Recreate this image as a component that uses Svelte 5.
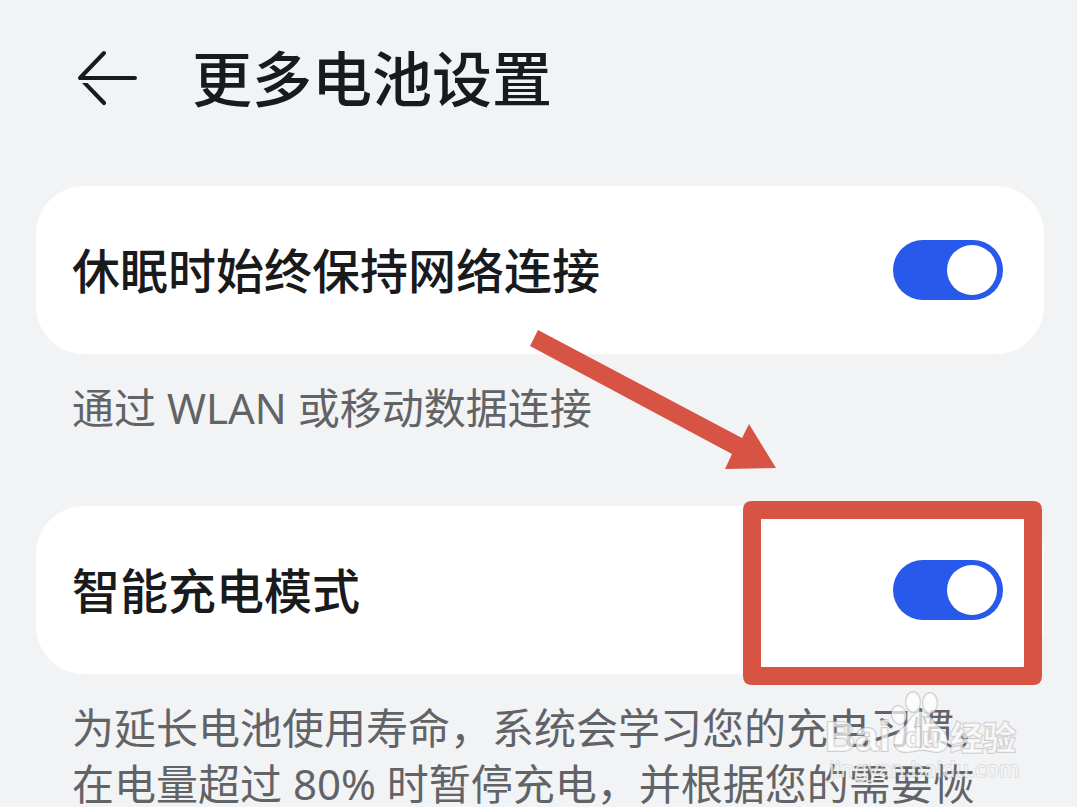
<script>
  let keepNetwork = true;
  let smartCharge = true;
</script>

<div class="page">
  <header>
    <button class="back" type="button" aria-label="返回">
      <svg width="64" height="60" viewBox="0 0 64 60">
        <path class="shaft" d="M28 5L4 30H59" />
        <path class="barb" d="M6 35H11.500L29.500 53.500A2 2 0 0 1 26.500 56.500Z" />
      </svg>
    </button>
    <h1>更多电池设置</h1>
  </header>

  <section>
    <div class="card">
      <label for="network">休眠时始终保持网络连接</label>
      <div class="control">
        <input id="network" class="switch" type="checkbox" role="switch" bind:checked={keepNetwork} />
      </div>
      <svg class="arrow" width="248" height="142" viewBox="0 0 248 142">
        <path d="M9 0L213 108L220 94L247 138L196 139L203 124L1 16Z" />
      </svg>
    </div>
    <p>通过 WLAN 或移动数据连接</p>
  </section>

  <section>
    <div class="card">
      <label for="charge">智能充电模式</label>
      <div class="control">
        <input id="charge" class="switch" type="checkbox" role="switch" bind:checked={smartCharge} />
        <svg class="frame" width="300" height="184" viewBox="0 0 300 184">
          <path fill-rule="evenodd" d="M9 0H290Q299 0 299 9V175Q299 184 290 184H9Q0 184 0 175V9Q0 0 9 0ZM18 18V166H281V18Z" />
        </svg>
      </div>
    </div>
    <div class="note">
      <p>为延长电池使用寿命，系统会学习您的充电习惯，在电量超过 80% 时暂停充电，并根据您的需要恢</p>
      <svg class="watermark" width="204" height="100" viewBox="0 0 204 100">
        <text class="brand" x="5" y="61">Bai</text>
        <g class="paw">
          <ellipse cx="93" cy="12" rx="7" ry="10" />
          <ellipse cx="110" cy="13" rx="7" ry="10" />
          <ellipse cx="79" cy="25" rx="7" ry="9" transform="rotate(-15 79 25)" />
          <path d="M101 22C92 22 90 33 83 38C71 46 71 62 86 62C93 62 96 60 102 60C108 60 112 62 117 62C130 62 130 46 120 38C112 33 110 22 101 22Z" />
        </g>
        <text class="du" x="85" y="57">du</text>
        <text class="cn" x="130" y="60">经验</text>
        <text class="url" x="9" y="87">jingyan.baidu.com</text>
      </svg>
    </div>
  </section>
</div>

<style>
  :global(body) {
    margin: 0;
    background: #f2f3f5;
    overflow: hidden;
  }
  .page {
    padding: 42px 33px 0 36px;
    font-family: "Noto Sans CJK SC", sans-serif;
    color: #191a1c;
  }
  header {
    display: flex;
    align-items: center;
    gap: 52px;
    height: 72px;
    padding-left: 40px;
    margin-bottom: 72px;
  }
  .back {
    display: flex;
    padding: 0;
    border: 0;
    background: none;
  }
  .shaft {
    fill: none;
    stroke: #191a1c;
    stroke-width: 4;
    stroke-linecap: round;
    stroke-linejoin: round;
  }
  .barb { fill: #191a1c; }
  h1 {
    margin: 0;
    padding-bottom: 4px;
    font-size: 60px;
    line-height: 72px;
    font-weight: 500;
  }
  section { margin-bottom: 70px; }
  .card {
    position: relative;
    display: flex;
    align-items: center;
    justify-content: space-between;
    height: 168px;
    padding: 0 41px 0 36px;
    border-radius: 48px;
    background: #fff;
  }
  label {
    padding-bottom: 4px;
    font-size: 48px;
    line-height: 60px;
    font-weight: 500;
  }
  .control {
    position: relative;
    display: flex;
  }
  .switch {
    appearance: none;
    display: flex;
    align-items: center;
    box-sizing: border-box;
    width: 110px;
    height: 60px;
    margin: 0;
    padding: 0 6px;
    border-radius: 30px;
    background: #c9cbd0;
  }
  .switch::before {
    content: "";
    width: 50px;
    height: 50px;
    border-radius: 50%;
    background: #fff;
  }
  .switch:checked {
    justify-content: flex-end;
    background: #2859ea;
  }
  p {
    margin: 0;
    padding: 26px 36px 0;
    font-family: "Noto Sans", "Noto Sans CJK SC", sans-serif;
    font-size: 42px;
    line-height: 56px;
    color: #626366;
  }
  .arrow {
    position: absolute;
    left: 493px;
    top: 144px;
    fill: #d75344;
    pointer-events: none;
  }
  .frame {
    position: absolute;
    right: -40px;
    top: -59px;
    fill: #d75344;
    pointer-events: none;
  }
  .note { position: relative; }
  .watermark {
    position: absolute;
    right: 20px;
    top: 16px;
    overflow: visible;
    fill: #fff;
    fill-opacity: 0.7;
    stroke: #aaa;
    stroke-opacity: 0.5;
    stroke-width: 2;
    paint-order: stroke;
    pointer-events: none;
  }
  .brand, .du {
    font-family: "Liberation Sans", sans-serif;
    font-weight: 700;
    font-size: 42px;
  }
  .du { font-size: 28px; }
  .cn {
    font-weight: 700;
    font-size: 33px;
  }
  .url {
    font-family: "Noto Sans", sans-serif;
    font-size: 22px;
    stroke-opacity: 0.3;
  }
</style>
